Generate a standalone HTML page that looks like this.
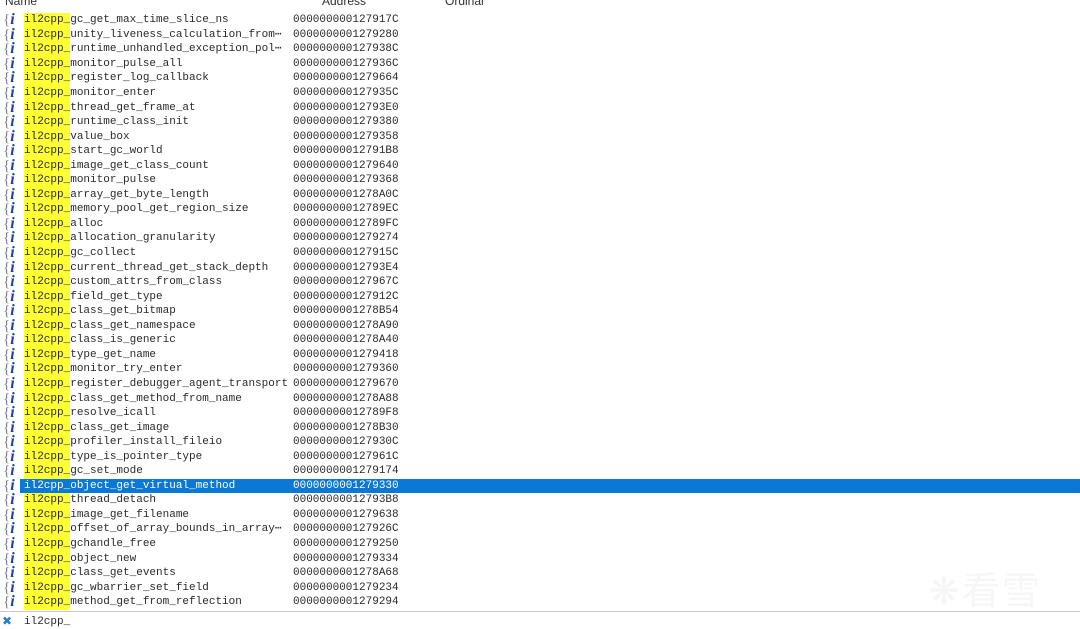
<!DOCTYPE html>
<html><head><meta charset="utf-8"><style>
body{margin:0;width:1080px;height:629px;overflow:hidden;background:#fff;position:relative;font-family:"Liberation Mono",monospace;font-size:11px;color:#2a2a2a}
.h{position:absolute;top:-6px;font-family:"Liberation Sans",sans-serif;font-size:12px;color:#333}
.r{position:absolute;left:0;width:1080px;height:14.6px;line-height:14.6px;white-space:pre}
.ic{position:absolute;left:3px;top:0;width:18px;font-family:"Liberation Serif",serif;font-weight:bold;font-style:italic;color:#1a3fb0;font-size:16px;line-height:14px}
.ic b{color:#7a8090;font-weight:normal;font-style:normal;font-size:15px;margin-right:0px}
.n{position:absolute;left:24px}
.y{background:#ffff33;display:inline-block;height:14.6px}
.a{position:absolute;left:293px}
.s{background:#0a78d4;left:20px;width:1060px}
.s .n,.s .a{color:#fff}
.s .n{left:4px}.s .a{left:273px}.s .ic{left:-17px}
</style></head><body>
<div class="h" style="left:5px">Name</div>
<div class="h" style="left:322px">Address</div>
<div class="h" style="left:445px">Ordinal</div>
<div id="rows"></div>
<div style="position:absolute;left:0;top:611px;width:1080px;height:1px;background:#c8c8c8"></div>
<div style="position:absolute;left:2px;top:614px;color:#2a7fd4;font-family:'DejaVu Sans',sans-serif;font-size:12px">✖</div>
<div style="position:absolute;left:24px;top:615px;line-height:14px">il2cpp_</div>
<div style="position:absolute;left:928px;top:560px;font-family:'Noto Sans CJK SC',sans-serif;font-size:38px;color:#f6f6f6;letter-spacing:2px">❋看雪</div>
<script>
var d=[["gc_get_max_time_slice_ns","000000000127917C"],["unity_liveness_calculation_from\u22ef","0000000001279280"],["runtime_unhandled_exception_pol\u22ef","000000000127938C"],["monitor_pulse_all","000000000127936C"],["register_log_callback","0000000001279664"],["monitor_enter","000000000127935C"],["thread_get_frame_at","00000000012793E0"],["runtime_class_init","0000000001279380"],["value_box","0000000001279358"],["start_gc_world","00000000012791B8"],["image_get_class_count","0000000001279640"],["monitor_pulse","0000000001279368"],["array_get_byte_length","0000000001278A0C"],["memory_pool_get_region_size","00000000012789EC"],["alloc","00000000012789FC"],["allocation_granularity","0000000001279274"],["gc_collect","000000000127915C"],["current_thread_get_stack_depth","00000000012793E4"],["custom_attrs_from_class","000000000127967C"],["field_get_type","000000000127912C"],["class_get_bitmap","0000000001278B54"],["class_get_namespace","0000000001278A90"],["class_is_generic","0000000001278A40"],["type_get_name","0000000001279418"],["monitor_try_enter","0000000001279360"],["register_debugger_agent_transport","0000000001279670"],["class_get_method_from_name","0000000001278A88"],["resolve_icall","00000000012789F8"],["class_get_image","0000000001278B30"],["profiler_install_fileio","000000000127930C"],["type_is_pointer_type","000000000127961C"],["gc_set_mode","0000000001279174"],["object_get_virtual_method","0000000001279330"],["thread_detach","00000000012793B8"],["image_get_filename","0000000001279638"],["offset_of_array_bounds_in_array\u22ef","000000000127926C"],["gchandle_free","0000000001279250"],["object_new","0000000001279334"],["class_get_events","0000000001278A68"],["gc_wbarrier_set_field","0000000001279234"],["method_get_from_reflection","0000000001279294"]];
var h="";d.forEach(function(e,i){var t=13.2+i*14.55;var s=i==32;h+='<div class="r'+(s?' s':'')+'" style="top:'+t+'px"><span class="ic"><b>{</b>i</span><span class="n"><span class="'+(s?'':'y')+'">il2cpp_</span>'+e[0]+'</span><span class="a">'+e[1]+'</span></div>';});
document.getElementById("rows").innerHTML=h;
</script>
</body></html>
